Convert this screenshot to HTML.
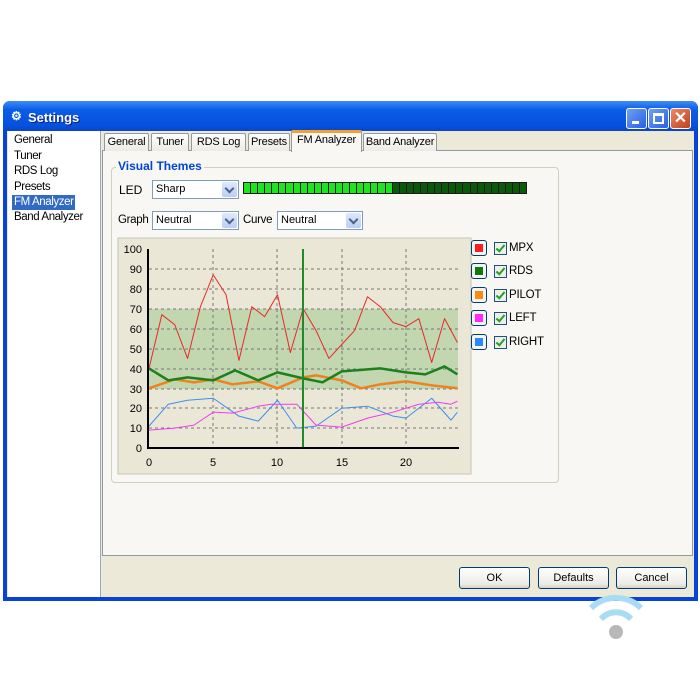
<!DOCTYPE html>
<html><head><style>
*{box-sizing:border-box;margin:0;padding:0}
body{width:700px;height:700px;background:#fff;position:relative;overflow:hidden;font-family:"Liberation Sans",sans-serif;font-size:11px;color:#000}
.a{position:absolute;white-space:nowrap}
.tab{position:absolute;top:133px;height:18px;background:linear-gradient(#fefefe,#ecebe5);border:1px solid #919b9c;border-bottom:none;border-radius:2px 2px 0 0;font-size:11px;letter-spacing:-0.2px;text-align:center;line-height:17px;white-space:nowrap}
.dd{position:absolute;height:19px;background:#fff;border:1px solid #7f9db9;font-size:11px;line-height:17px;padding-left:3px}
.dd i{position:absolute;right:1px;top:1px;width:15px;height:15px;background:linear-gradient(#dfe9fd,#b9cdf6);border-radius:2px}
.dd i:after{content:"";position:absolute;left:4px;top:3px;width:5px;height:5px;border-right:2px solid #4d6185;border-bottom:2px solid #4d6185;transform:rotate(45deg)}
.btn{position:absolute;top:567px;height:22px;width:71px;border:1px solid #003c74;border-radius:3px;background:linear-gradient(#fff,#ecebe6 80%,#d6d0c5);text-align:center;line-height:20px;font-size:11px}
.sw{position:absolute;left:471px;width:16px;height:16px;border:1px solid #003c74;border-radius:3px;background:#f4f4f0}
.sw b{position:absolute;left:3px;top:3px;width:8px;height:8px}
.cb{position:absolute;left:494px;width:13px;height:13px;border:1px solid #1c5180;background:#f0f0ea}
.cb:after{content:"";position:absolute;left:3px;top:0px;width:3px;height:7px;border-right:2px solid #21a121;border-bottom:2px solid #21a121;transform:rotate(40deg)}
.lb{position:absolute;left:509px;font-size:11.5px;letter-spacing:-0.2px}
.lt{font-size:11.5px;letter-spacing:-0.4px}
</style></head><body>
<div class="a" style="left:3px;top:101px;width:695px;height:500px;background:#0842d6;border-radius:7px 7px 0 0"></div>
<div class="a" style="left:3px;top:101px;width:695px;height:30px;background:linear-gradient(#3d8cf7,#0a5ce6 30%,#0651e0 80%,#0a45c8);border-radius:7px 7px 0 0"></div>
<div class="a" style="left:11px;top:109px;color:#fff;font-size:12px;font-weight:bold">⚙</div>
<div class="a" style="left:28px;top:110px;color:#fff;font-size:13px;font-weight:bold;text-shadow:1px 1px #0a1e80">Settings</div>
<div class="a" style="left:626px;top:108px;width:21px;height:21px;border:1px solid #fff;border-radius:3px;background:linear-gradient(135deg,#6ea0f8,#2860e0)"><div class="a" style="left:5px;top:12px;width:7px;height:3px;background:#fff"></div></div>
<div class="a" style="left:648px;top:108px;width:21px;height:21px;border:1px solid #fff;border-radius:3px;background:linear-gradient(135deg,#6ea0f8,#2860e0)"><div class="a" style="left:4px;top:4px;width:11px;height:11px;border:2px solid #fff;border-top-width:3px"></div></div>
<div class="a" style="left:670px;top:108px;width:21px;height:21px;border:1px solid #fff;border-radius:3px;background:linear-gradient(135deg,#e88a6a,#c2401a);color:#fff;font-weight:bold;font-size:16px;text-align:center;line-height:19px">✕</div>
<div class="a" style="left:7px;top:131px;width:687px;height:466px;background:#ece9d8"></div>
<div class="a" style="left:8px;top:131px;width:93px;height:466px;background:#fff;border-right:1px solid #9aa8c0"></div>
<div class="a lt" style="left:14px;top:133px;line-height:15.6px">General<br>Tuner<br>RDS Log<br>Presets</div>
<div class="a" style="left:12px;top:195px;width:63px;height:15px;background:#316ac5"></div>
<div class="a lt" style="left:14px;top:195px;line-height:15.6px;color:#fff">FM Analyzer</div>
<div class="a lt" style="left:14px;top:211px">Band Analyzer</div>
<div class="a" style="left:102px;top:131px;width:592px;height:20px;background:#ece9d8"></div>
<div class="a" style="left:102px;top:150px;width:591px;height:406px;background:#f8f7f3;border:1px solid #919b9c"></div>
<div class="tab" style="left:104px;width:45px">General</div>
<div class="tab" style="left:151px;width:38px">Tuner</div>
<div class="tab" style="left:191px;width:55px">RDS Log</div>
<div class="tab" style="left:248px;width:42px">Presets</div>
<div class="tab" style="left:291px;top:130px;height:22px;width:71px;background:#f8f7f3;border-top:3px solid #f3a02e;line-height:14px">FM Analyzer</div>
<div class="tab" style="left:363px;width:74px">Band Analyzer</div>
<div class="a" style="left:111px;top:167px;width:448px;height:316px;border:1px solid #d0d0bf;border-radius:4px"></div>
<div class="a" style="left:116px;top:159px;padding:0 2px;background:#f8f7f3;color:#0046d5;font-weight:bold;font-size:12px">Visual Themes</div>
<div class="a" style="left:119px;top:183px;font-size:12px">LED</div>
<div class="dd" style="left:152px;top:180px;width:87px">Sharp<i></i></div>
<div class="a" style="left:243px;top:182px;width:284px;height:12px;background:#1a1a1a;padding:1px;display:flex;gap:1px" id="led"></div>
<div class="a" style="left:118px;top:214px;font-size:11.5px;letter-spacing:-0.3px">Graph</div>
<div class="dd" style="left:152px;top:211px;width:87px">Neutral<i></i></div>
<div class="a" style="left:243px;top:214px;font-size:11.5px;letter-spacing:-0.3px">Curve</div>
<div class="dd" style="left:277px;top:211px;width:86px">Neutral<i></i></div>
<svg class="a" style="left:0;top:0" width="700" height="700">
<rect x="118" y="238" width="353" height="236" fill="#ebe7d6" stroke="#c9c5b5"/>
<rect x="149" y="309" width="309" height="80" fill="#c2d6b0"/>
<g stroke="#777" stroke-dasharray="3,3" stroke-width="1">
<line x1="149" x2="458" y1="269" y2="269"/><line x1="149" x2="458" y1="289" y2="289"/><line x1="149" x2="458" y1="309" y2="309"/><line x1="149" x2="458" y1="329" y2="329"/><line x1="149" x2="458" y1="349" y2="349"/><line x1="149" x2="458" y1="369" y2="369"/><line x1="149" x2="458" y1="389" y2="389"/><line x1="149" x2="458" y1="408" y2="408"/><line x1="149" x2="458" y1="428" y2="428"/>
<line y1="249" y2="448" x1="213" x2="213"/><line y1="249" y2="448" x1="277" x2="277"/><line y1="249" y2="448" x1="342" x2="342"/><line y1="249" y2="448" x1="406" x2="406"/>
</g>
<g transform="translate(149,448) scale(12.85,-1.99)" fill="none" stroke-linejoin="round">
<polyline vector-effect="non-scaling-stroke" stroke="#3c8ff0" stroke-width="1" points="0,11 1.5,22 3,24 5,25 7,16 8.5,13.5 10,24 11.5,10 13,11 15,20 17,21 19,16 20,15 22,25 23.5,14 24,18"/>
<polyline vector-effect="non-scaling-stroke" stroke="#f03cf0" stroke-width="1" points="0,9 1,9.5 2,10 3.5,11.5 5,18 6.5,17.5 8.5,21 9.5,22 11.5,22 13,11.5 15,10.5 17,15 19,18 21,22 22.5,23 23.5,22 24,23.5"/>
<polyline vector-effect="non-scaling-stroke" stroke="#f0821e" stroke-width="2.5" points="0,30 2,34.5 3.5,33 5,34.5 6.5,32 8.5,33.5 10,30 12,35.5 13,36.5 15,34 16.5,30 18,32 20,33.5 22,31.5 24,30"/>
<polyline vector-effect="non-scaling-stroke" stroke="#1c801c" stroke-width="2.5" points="0,40 1.5,34 3,35.5 5,34 6.7,39 8.5,34 10,38 12,35 13.5,33 15,38.5 17,39.5 18,40 20,38 21.5,37 23,41 24,37"/>
<polyline vector-effect="non-scaling-stroke" stroke="#e82828" stroke-width="1" points="0,40 1,67 2,62 3,45 4,71 5,87 6,77 7,44 8,71 9,66 10,77 11,48 12,70 13,59 14,45 15,52 16,59 17,76 18,71 19,63 20,61 21,65 22,43 23,65 24,53"/>
</g>
<line x1="303" x2="303" y1="249" y2="448" stroke="#1f8a2a" stroke-width="2"/>
<line x1="148" x2="148" y1="249" y2="449" stroke="#000" stroke-width="2"/>
<line x1="147" x2="459" y1="448" y2="448" stroke="#000" stroke-width="2"/>
<g font-family="Liberation Sans" font-size="11" text-anchor="end">
<text x="142" y="253">100</text><text x="142" y="273">90</text><text x="142" y="293">80</text><text x="142" y="313">70</text><text x="142" y="333">60</text><text x="142" y="353">50</text><text x="142" y="373">40</text><text x="142" y="412">20</text><text x="142" y="393">30</text><text x="142" y="432">10</text><text x="142" y="452">0</text>
</g>
<g font-family="Liberation Sans" font-size="11" text-anchor="middle">
<text x="149" y="466">0</text><text x="213" y="466">5</text><text x="277" y="466">10</text><text x="342" y="466">15</text><text x="406" y="466">20</text>
</g>
<path d="M591 608 A36 36 0 0 1 641 608" stroke="#a9dcf4" stroke-width="6" fill="none"/>
<path d="M601 619 A20 20 0 0 1 631 619" stroke="#a9dcf4" stroke-width="6" fill="none"/>
<circle cx="616" cy="632" r="7" fill="#b8b8b8"/>
</svg>
<div class="sw" style="top:240px"><b style="background:#ff1c1c"></b></div>
<div class="sw" style="top:263px"><b style="background:#0c7a0c"></b></div>
<div class="sw" style="top:287px"><b style="background:#ff8a10"></b></div>
<div class="sw" style="top:310px"><b style="background:#ff28ff"></b></div>
<div class="sw" style="top:334px"><b style="background:#2a88ff"></b></div>
<div class="cb" style="top:242px"></div><div class="lb" style="top:242px">MPX</div>
<div class="cb" style="top:265px"></div><div class="lb" style="top:265px">RDS</div>
<div class="cb" style="top:289px"></div><div class="lb" style="top:289px">PILOT</div>
<div class="cb" style="top:312px"></div><div class="lb" style="top:312px">LEFT</div>
<div class="cb" style="top:336px"></div><div class="lb" style="top:336px">RIGHT</div>
<div class="btn" style="left:459px">OK</div>
<div class="btn" style="left:538px">Defaults</div>
<div class="btn" style="left:616px">Cancel</div>
<script>
var l=document.getElementById('led');for(var i=0;i<40;i++){var d=document.createElement('div');d.style.cssText='flex:1;height:10px;background:'+(i<21?'#1ee61e':'#0a5a0a');l.appendChild(d);}
</script>
</body></html>
